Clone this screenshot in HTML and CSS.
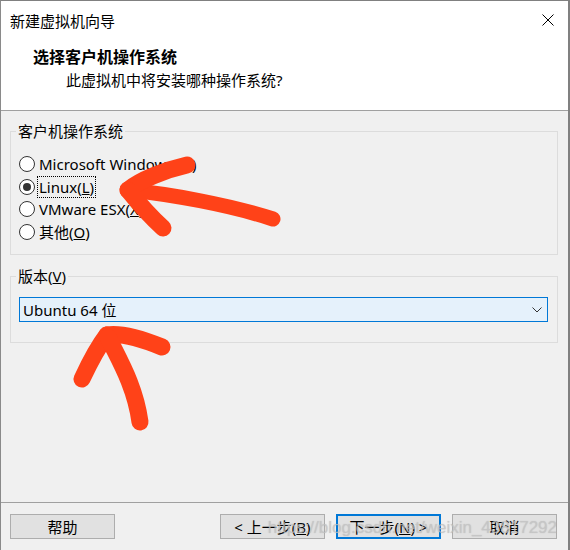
FILE: index.html
```html
<!DOCTYPE html>
<html>
<head>
<meta charset="utf-8">
<link rel="stylesheet" href="styles.css">
</head>
<body>
<div class="window">
  <div class="top">
    <div class="titlebar">
      <span class="title">新建虚拟机向导</span>
      <svg class="close" width="12" height="12" viewBox="0 0 12 12"><path d="M0.5 0.5 L11.5 11.5 M11.5 0.5 L0.5 11.5" stroke="#000" stroke-width="1" fill="none"/></svg>
    </div>
    <div class="header">
      <div class="h-title">选择客户机操作系统</div>
      <div class="h-sub">此虚拟机中将安装哪种操作系统?</div>
    </div>
  </div>
  <div class="body">
    <fieldset class="group g-os">
      <legend>客户机操作系统</legend>
      <div class="radio"><span class="circle"></span><span class="lbl">Microsoft Windows(<u>W</u>)</span></div>
      <div class="radio"><span class="circle checked"></span><span class="lbl focus">Linux(<u>L</u>)</span></div>
      <div class="radio"><span class="circle"></span><span class="lbl">VMware ESX(<u>X</u>)</span></div>
      <div class="radio"><span class="circle"></span><span class="lbl">其他(<u>O</u>)</span></div>
    </fieldset>
    <fieldset class="group g-ver">
      <legend>版本(<u>V</u>)</legend>
      <div class="combo">
        <span class="combo-text">Ubuntu 64 位</span>
        <svg class="chev" width="10" height="6" viewBox="0 0 10 6"><path d="M0.5 0.5 L5 5 L9.5 0.5" stroke="#333" stroke-width="1" fill="none"/></svg>
      </div>
    </fieldset>
  </div>
  <div class="footer">
    <button class="btn">帮助</button>
    <div class="spacer"></div>
    <button class="btn">&lt; 上一步(<u>B</u>)</button>
    <button class="btn primary">下一步(<u>N</u>) &gt;</button>
    <button class="btn">取消</button>
    <div class="watermark">https://blog.csdn.net/weixin_43817292</div>
  </div>
  <svg class="arrows" width="570" height="550" viewBox="0 0 570 550">
    <g stroke="#ff4218" fill="none" stroke-linecap="round" stroke-linejoin="round">
      <path d="M128 190 C170 194, 230 205, 273 219" stroke-width="15"/>
      <path d="M187 165 C165 170, 140 180, 128 190" stroke-width="17"/>
      <path d="M128 190 C140 205, 152 218, 163 228" stroke-width="17"/>
      <path d="M107 335 C97 348, 89 364, 82 379" stroke-width="17"/>
      <path d="M107 335 Q125 332, 162 347" stroke-width="17"/>
      <path d="M108 337 C118 358, 135 385, 140 422" stroke-width="17"/>
    </g>
  </svg>
</div>
</body>
</html>
```

FILE: styles.css
```css
html, body {
  margin: 0;
  padding: 0;
}
body {
  background: #f0f0f0;
  font-family: "Noto Sans", "Noto Sans CJK SC", sans-serif;
  font-size: 15px;
  color: #000;
}
.window {
  position: relative;
  width: 570px;
  height: 550px;
  box-sizing: border-box;
  border-top: 1px solid #808080;
  border-left: 1px solid #8a8a8a;
  border-right: 2px solid #808080;
  background: #f0f0f0;
  display: flex;
  flex-direction: column;
  overflow: hidden;
}
.top {
  background: #fff;
  border-bottom: 1px solid #a0a0a0;
}
.titlebar {
  height: 39px;
  display: flex;
  align-items: center;
  justify-content: space-between;
  padding: 0 14px 0 9px;
}
.title {
  font-size: 15px;
  line-height: 20px;
}
.close {
  display: block;
  margin-top: -2px;
}
.header {
  height: 70px;
  box-sizing: border-box;
  padding-top: 6px;
}
.h-title {
  font-weight: bold;
  font-size: 16px;
  line-height: 22px;
  padding-left: 32px;
}
.h-sub {
  font-size: 15px;
  line-height: 22px;
  padding-left: 65px;
  margin-top: 1px;
}
.body {
  flex: 1;
  padding: 10px 10px 0 9px;
}
.group {
  margin: 0;
  border: 1px solid #dcdcdc;
  min-width: 0;
}
.group legend {
  font-size: 15px;
  line-height: 20px;
  padding: 0 2px;
  margin-left: -3px;
}
.g-os {
  padding: 12px 8px 11px 8px;
}
.g-ver {
  margin-top: 11px;
  padding: 11px 9px 20px 8px;
}
.radio {
  height: 22.5px;
  display: flex;
  align-items: center;
}
.circle {
  width: 16px;
  height: 16px;
  box-sizing: border-box;
  border: 1px solid #333;
  border-radius: 50%;
  background: #fff;
  display: flex;
  align-items: center;
  justify-content: center;
  flex: none;
}
.circle.checked::after {
  content: "";
  width: 8px;
  height: 8px;
  border-radius: 50%;
  background: #333;
}
.lbl {
  margin-left: 4px;
  line-height: 20px;
  white-space: nowrap;
}
.lbl.focus {
  outline: 1px dotted #000;
  padding: 0 1px;
  margin-left: 3px;
}
.combo {
  height: 25px;
  box-sizing: border-box;
  border: 1px solid #0078d7;
  background: #e5f1fb;
  display: flex;
  align-items: center;
  justify-content: space-between;
  padding: 0 5px 0 3px;
}
.combo-text {
  line-height: 20px;
}
.chev {
  display: block;
}
.footer {
  position: relative;
  height: 48px;
  box-sizing: border-box;
  border-top: 1px solid #a0a0a0;
  padding: 11px 11px 11px 9px;
  display: flex;
  gap: 11px;
}
.spacer {
  flex: 1;
}
.btn {
  width: 105px;
  height: 25px;
  box-sizing: border-box;
  border: 1px solid #adadad;
  background: #e1e1e1;
  font-family: "Noto Sans", "Noto Sans CJK SC", sans-serif;
  font-size: 15px;
  color: #000;
  padding: 0;
  margin: 0;
  line-height: 20px;
}
.btn.primary {
  border: 2px solid #0078d7;
}
.watermark {
  position: absolute;
  right: 11px;
  top: 14px;
  font-family: "Liberation Sans", sans-serif;
  font-size: 17px;
  line-height: 22px;
  color: rgba(200, 200, 200, 0.7);
  text-shadow: 0 0 1px rgba(120, 120, 120, 0.35);
  pointer-events: none;
  white-space: nowrap;
}
.arrows {
  position: absolute;
  left: -1px;
  top: -1px;
  pointer-events: none;
}
```
